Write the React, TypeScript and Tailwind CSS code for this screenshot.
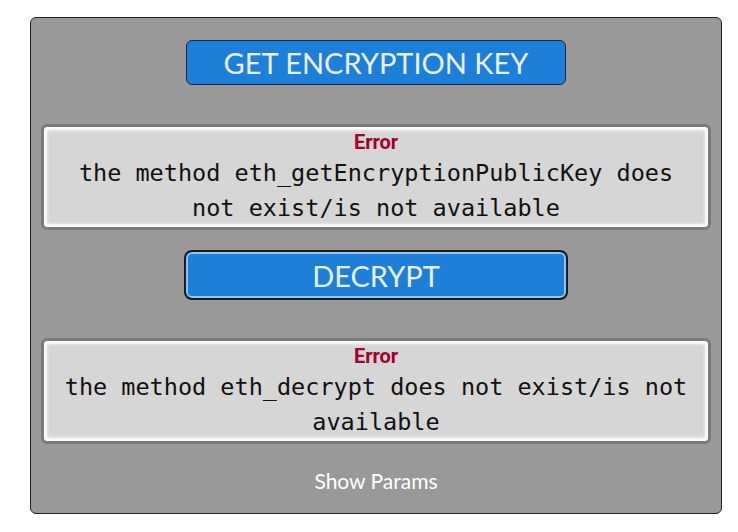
import React from 'react';

const ErrorBox = ({ message }: { message: string }) => (
  <div className="mx-[10px] rounded-md border-[3px] border-[#7a7a7a] bg-[#d6d6d6] shadow-[inset_0_0_3px_3px_#ffffff] px-[10px] pt-[1px] pb-[1px] text-center">
    <div className="font-['Liberation_Sans_Narrow','Roboto',sans-serif] font-bold text-[20px] leading-[28px] text-[#a3002d]">Error</div>
    <div className="font-['DejaVu_Sans_Mono',monospace] text-[23.5px] leading-[35px] text-[#111]">{message}</div>
  </div>
);

const App = (): JSX.Element => {
  return (
    <div className="w-[738px] h-[532px] bg-white pt-[17px] pl-[30px]">
      <div className="w-[692px] h-[497px] rounded-md border border-[#222] bg-[#999999] flex flex-col font-['Lato',sans-serif]">
        <button className="self-center mt-[22px] w-[380px] h-[45px] rounded-md border border-[#1a2a40] bg-[#1e7fd8] text-[#e8f0fa] text-[29px] leading-none">
          GET ENCRYPTION KEY
        </button>
        <div className="mt-[39px]">
          <ErrorBox message="the method eth_getEncryptionPublicKey does not exist/is not available" />
        </div>
        <button className="self-center mt-[20px] w-[384px] h-[50px] rounded-lg border-2 border-[#1b1b1b] bg-[#1e7fd8] shadow-[inset_0_0_0_2px_#8cc4f5] text-[#e8f0fa] text-[29px] leading-none">
          DECRYPT
        </button>
        <div className="mt-[38px]">
          <ErrorBox message="the method eth_decrypt does not exist/is not available" />
        </div>
        <div className="mt-[22px] text-center text-white text-[21px] leading-[29px]">Show Params</div>
      </div>
    </div>
  );
};

export default App;
